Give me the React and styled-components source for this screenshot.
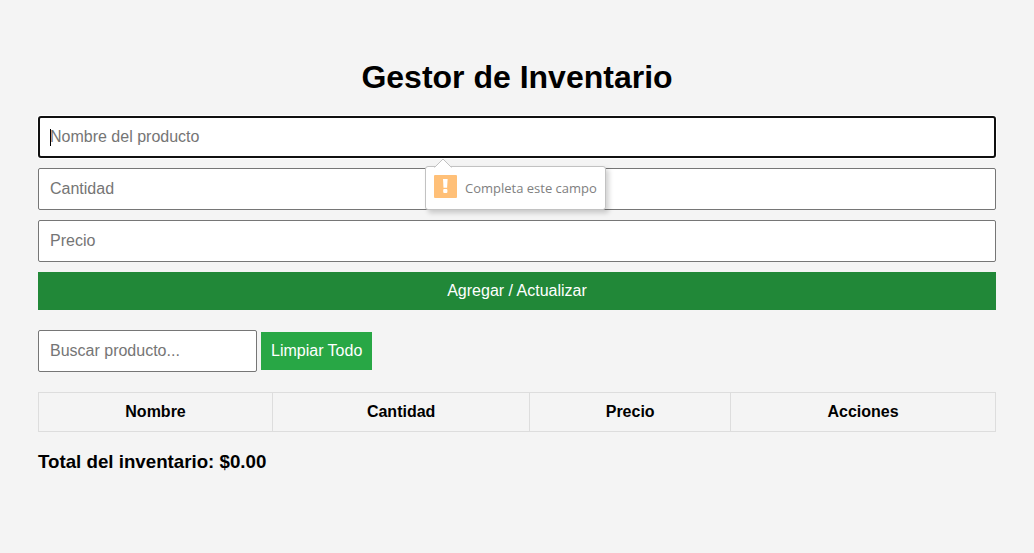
import React from "react";
import styled, { createGlobalStyle } from "styled-components";

const GlobalStyle = createGlobalStyle`
  *, *::before, *::after { box-sizing: border-box; }
  body {
    margin: 0;
    background: #f4f4f4;
    color: #000;
    font-family: "Liberation Sans", Arial, sans-serif;
    font-size: 16px;
  }
`;

const Page = styled.main`
  padding: 59px 38px;
`;

const Title = styled.h1`
  margin: 0 0 21px;
  font-size: 32px;
  line-height: 36px;
  text-align: center;
`;

const Form = styled.form`
  display: flex;
  flex-direction: column;
  gap: 10px;
  margin-bottom: 20px;
`;

const Field = styled.div`
  position: relative;
  display: flex;
`;

const Input = styled.input`
  width: ${(p) => p.$width || "100%"};
  height: 42px;
  margin: 0;
  padding: 10px 11px;
  border: 1px solid #767676;
  border-radius: 2px;
  background: #fff;
  font: inherit;
  outline: none;

  &::placeholder { color: #757575; }
`;

const ActiveInput = styled(Input)`
  padding: 9px 10px;
  border: 2px solid #101010;
  border-radius: 3px;
  box-shadow: 0 0 0 1px #fff;
  caret-color: transparent;
`;

const Caret = styled.span`
  position: absolute;
  left: 12px;
  top: 13px;
  width: 1px;
  height: 17px;
  background: #000;
`;

const Bubble = styled.div`
  position: absolute;
  z-index: 1;
  top: 50px;
  left: calc(50% - 92px);
  display: flex;
  align-items: flex-start;
  gap: 8px;
  width: 181px;
  height: 44px;
  padding: 8px;
  border: 1px solid #c2c2c2;
  border-radius: 3px;
  background: #fff;
  box-shadow: 3px 3px 5px rgba(0, 0, 0, 0.18);
  color: #808080;
  font-family: "Open Sans", "Noto Sans", sans-serif;
  font-size: 13px;
  line-height: 26px;
  white-space: nowrap;
`;

const Pointer = styled.svg`
  position: absolute;
  top: -9px;
  left: 8px;
`;

const Button = styled.button`
  height: 38px;
  padding: 10px;
  border: none;
  background: ${(p) => (p.$dark ? "#218838" : "#28a745")};
  color: #fff;
  font: inherit;
  line-height: 18px;
  cursor: pointer;
`;

const Toolbar = styled.div`
  display: flex;
  align-items: center;
  gap: 4px;
  margin-bottom: 20px;
`;

const Table = styled.table`
  width: 100%;
  border-collapse: collapse;
`;

const HeaderCell = styled.th`
  padding: 10px;
  border: 1px solid #ddd;
  line-height: 18px;
  text-align: center;
`;

const Total = styled.h3`
  margin: 19px 0 0;
  line-height: 21px;
`;

function ValidationBubble() {
  return (
    <Bubble role="alert">
      <Pointer width="18" height="10" viewBox="0 0 18 10" aria-hidden="true">
        <path d="M0 10L9 1L18 10Z" fill="#fff" />
        <path d="M0.5 9.5L9 1L17.5 9.5" fill="none" stroke="#c2c2c2" />
      </Pointer>
      <svg width="23" height="23" viewBox="0 0 23 23" aria-hidden="true">
        <rect width="23" height="23" rx="1" fill="#ffc078" />
        <path d="M9 4H13.6L13.1 12.7H9.5Z" fill="#fff" />
        <rect x="9.2" y="14" width="4.2" height="4" rx="1" fill="#fff" />
      </svg>
      <span>Completa este campo</span>
    </Bubble>
  );
}

const columns = ["Nombre", "Cantidad", "Precio", "Acciones"];

export default function App() {
  return (
    <Page>
      <GlobalStyle />
      <Title>Gestor de Inventario</Title>
      <Form noValidate onSubmit={(e) => e.preventDefault()}>
        <Field>
          <ActiveInput type="text" placeholder="Nombre del producto" aria-label="Nombre del producto" required />
          <Caret />
          <ValidationBubble />
        </Field>
        <Field>
          <Input type="number" placeholder="Cantidad" aria-label="Cantidad" required />
        </Field>
        <Field>
          <Input type="number" placeholder="Precio" aria-label="Precio" required />
        </Field>
        <Button type="submit" $dark>Agregar / Actualizar</Button>
      </Form>
      <Toolbar>
        <Input type="text" $width="219px" placeholder="Buscar producto..." aria-label="Buscar producto" />
        <Button type="button">Limpiar Todo</Button>
      </Toolbar>
      <Table>
        <thead>
          <tr>
            {columns.map((name) => (
              <HeaderCell key={name} scope="col">{name}</HeaderCell>
            ))}
          </tr>
        </thead>
      </Table>
      <Total>Total del inventario: $0.00</Total>
    </Page>
  );
}
